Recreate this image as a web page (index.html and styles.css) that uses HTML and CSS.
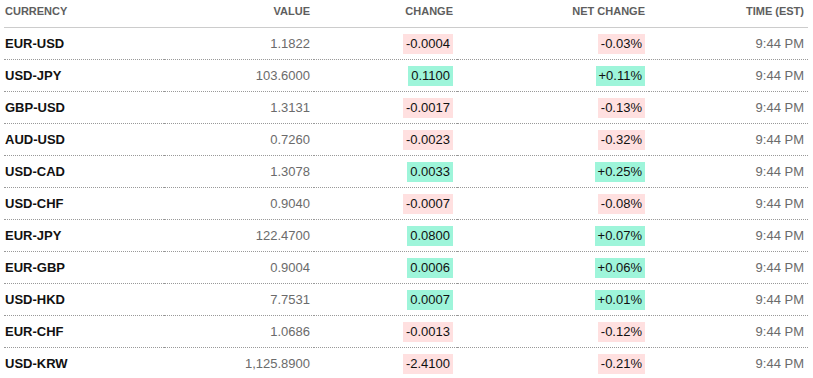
FILE: index.html
```html
<!DOCTYPE html>
<html>
<head>
    <meta name="viewport" content="width=device-width, initial-scale=1" />
    <title>Currencies</title>
    <link rel="stylesheet" href="styles.css">
</head>
<body>

    <table class="rates">
        <colgroup>
            <col class="col_name">
            <col class="col_value">
            <col class="col_change">
            <col class="col_net">
            <col class="col_time">
        </colgroup>
        <thead>
            <tr>
                <th class="name">Currency</th>
                <th>Value</th>
                <th>Change</th>
                <th>Net Change</th>
                <th>Time (EST)</th>
            </tr>
        </thead>
        <tbody>
            <tr>
                <td class="name">EUR-USD</td>
                <td class="value">1.1822</td>
                <td><span class="chip chip--down">-0.0004</span></td>
                <td><span class="chip chip--down">-0.03%</span></td>
                <td class="time">9:44 PM</td>
            </tr>
            <tr>
                <td class="name">USD-JPY</td>
                <td class="value">103.6000</td>
                <td><span class="chip chip--up">0.1100</span></td>
                <td><span class="chip chip--up">+0.11%</span></td>
                <td class="time">9:44 PM</td>
            </tr>
            <tr>
                <td class="name">GBP-USD</td>
                <td class="value">1.3131</td>
                <td><span class="chip chip--down">-0.0017</span></td>
                <td><span class="chip chip--down">-0.13%</span></td>
                <td class="time">9:44 PM</td>
            </tr>
            <tr>
                <td class="name">AUD-USD</td>
                <td class="value">0.7260</td>
                <td><span class="chip chip--down">-0.0023</span></td>
                <td><span class="chip chip--down">-0.32%</span></td>
                <td class="time">9:44 PM</td>
            </tr>
            <tr>
                <td class="name">USD-CAD</td>
                <td class="value">1.3078</td>
                <td><span class="chip chip--up">0.0033</span></td>
                <td><span class="chip chip--up">+0.25%</span></td>
                <td class="time">9:44 PM</td>
            </tr>
            <tr>
                <td class="name">USD-CHF</td>
                <td class="value">0.9040</td>
                <td><span class="chip chip--down">-0.0007</span></td>
                <td><span class="chip chip--down">-0.08%</span></td>
                <td class="time">9:44 PM</td>
            </tr>
            <tr>
                <td class="name">EUR-JPY</td>
                <td class="value">122.4700</td>
                <td><span class="chip chip--up">0.0800</span></td>
                <td><span class="chip chip--up">+0.07%</span></td>
                <td class="time">9:44 PM</td>
            </tr>
            <tr>
                <td class="name">EUR-GBP</td>
                <td class="value">0.9004</td>
                <td><span class="chip chip--up">0.0006</span></td>
                <td><span class="chip chip--up">+0.06%</span></td>
                <td class="time">9:44 PM</td>
            </tr>
            <tr>
                <td class="name">USD-HKD</td>
                <td class="value">7.7531</td>
                <td><span class="chip chip--up">0.0007</span></td>
                <td><span class="chip chip--up">+0.01%</span></td>
                <td class="time">9:44 PM</td>
            </tr>
            <tr>
                <td class="name">EUR-CHF</td>
                <td class="value">1.0686</td>
                <td><span class="chip chip--down">-0.0013</span></td>
                <td><span class="chip chip--down">-0.12%</span></td>
                <td class="time">9:44 PM</td>
            </tr>
            <tr>
                <td class="name">USD-KRW</td>
                <td class="value">1,125.8900</td>
                <td><span class="chip chip--down">-2.4100</span></td>
                <td><span class="chip chip--down">-0.21%</span></td>
                <td class="time">9:44 PM</td>
            </tr>
        </tbody>
    </table>

</body>
</html>
```

FILE: styles.css
```css
body {
    margin: 0;
    background-color: white;
    font-family: 'Liberation Sans', Arial, sans-serif;
    color: #111;
}

.rates {
    margin-left: 4px;
    width: 804px;
    table-layout: fixed;
    border-collapse: collapse;
}

.col_name { width: 160px; }
.col_value { width: 150px; }
.col_change { width: 143px; }
.col_net { width: 192px; }
.col_time { width: 159px; }

.rates th {
    padding: 4px 4px 9px 0;
    font-size: 11px;
    line-height: 14px;
    font-weight: bold;
    text-transform: uppercase;
    text-align: right;
    color: #5e5e5e;
    border-bottom: 1px solid #cccccc;
}

.rates td {
    height: 31px;
    padding: 0 4px 0 0;
    font-size: 13px;
    line-height: 20px;
    text-align: right;
    vertical-align: middle;
    border-bottom: 1px dotted #999999;
}

.rates tbody tr:last-child td {
    border-bottom: none;
}

.rates .name {
    padding-left: 1px;
    text-align: left;
}

.rates td.name {
    font-weight: bold;
    color: #111;
}

.value,
.time {
    color: #6b6b6b;
}

.chip {
    display: inline-block;
    padding: 0 3px;
    color: #111;
}

.chip--down {
    background-color: #ffe0e0;
}

.chip--up {
    background-color: #9ef5da;
}
```
